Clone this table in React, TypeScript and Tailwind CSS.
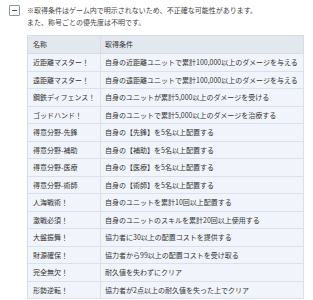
const rows: [string, string][] = [
  ['近距離マスター！', '自身の近距離ユニットで累計100,000以上のダメージを与える'],
  ['遠距離マスター！', '自身の遠距離ユニットで累計100,000以上のダメージを与える'],
  ['鋼鉄ディフェンス！', '自身のユニットが累計5,000以上のダメージを受ける'],
  ['ゴッドハンド！', '自身のユニットで累計5,000以上のダメージを治療する'],
  ['得意分野-先鋒', '自身の【先鋒】を5名以上配置する'],
  ['得意分野-補助', '自身の【補助】を5名以上配置する'],
  ['得意分野-医療', '自身の【医療】を5名以上配置する'],
  ['得意分野-術師', '自身の【術師】を5名以上配置する'],
  ['人海戦術！', '自身のユニットを累計10回以上配置する'],
  ['激戦必須！', '自身のユニットのスキルを累計20回以上使用する'],
  ['大盤振舞！', '協力者に30以上の配置コストを提供する'],
  ['財源確保！', '協力者から99以上の配置コストを受け取る'],
  ['完全無欠！', '耐久値を失わずにクリア'],
  ['形勢逆転！', '協力者が2点以上の耐久値を失った上でクリア'],
]

export default function App() {
  return (
    <div
      className="w-[313px] h-[300px] bg-white text-[#333] overflow-hidden"
      style={{ fontFamily: '"Noto Sans CJK JP", "Noto Sans", sans-serif' }}
    >
      <div className="flex pt-[4px] pl-[9px]">
        {/* collapse toggle */}
        <button className="mt-[1px] w-[11px] h-[11px] border border-[#8a94a6] rounded-[1px] flex items-center justify-center bg-white shrink-0">
          <span className="block w-[5px] h-[1px] bg-[#4a5568]" />
        </button>
        <div className="ml-[7px] text-[7px] leading-[12px] text-[#444]">
          <p>※取得条件はゲーム内で明示されないため、不正確な可能性があります。</p>
          <p>また、称号ごとの優先度は不明です。</p>
        </div>
      </div>

      {/* table */}
      <div className="ml-[27px] mt-[7px] w-[277px] border-l border-t border-[#d6dde6] text-[7px]">
        <div className="flex h-[18px] bg-[#e3e8ee]">
          <div className="w-[73px] shrink-0 flex items-center px-[5px] border-r border-b border-[#d6dde6]">名称</div>
          <div className="flex-1 flex items-center px-[4px] border-r border-b border-[#d6dde6]">取得条件</div>
        </div>
        {rows.map(([name, cond]) => (
          <div key={name} className="flex h-[17.5px] bg-[#f1f5fb]">
            <div className="w-[73px] shrink-0 flex items-center px-[5px] border-r border-b border-[#d9e1ec] whitespace-nowrap">
              {name}
            </div>
            <div className="flex-1 flex items-center px-[4px] border-r border-b border-[#d9e1ec] whitespace-nowrap">
              {cond}
            </div>
          </div>
        ))}
      </div>
    </div>
  )
}
